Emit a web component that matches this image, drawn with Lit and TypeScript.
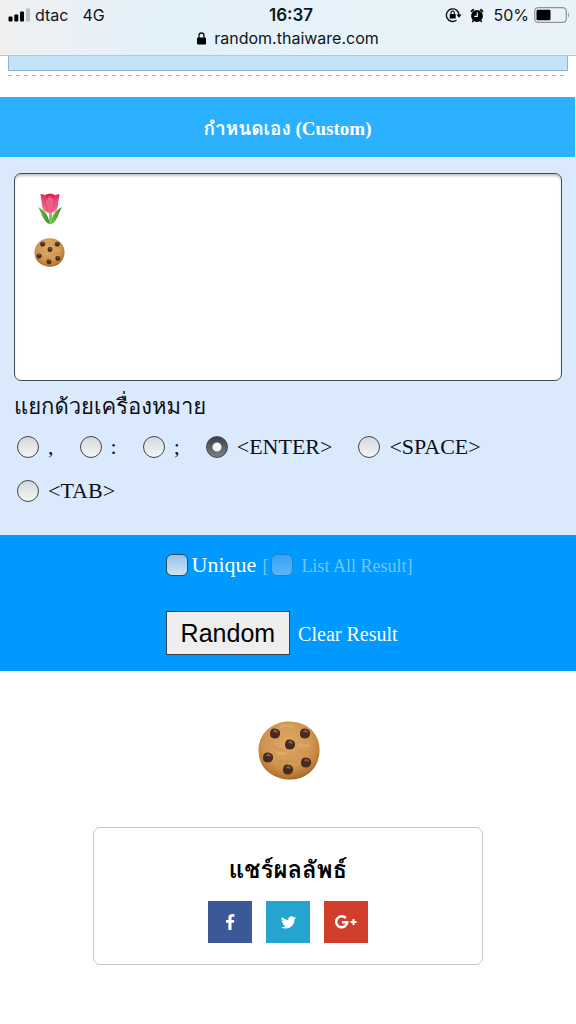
import { LitElement, html, css, svg } from "lit";
import { customElement, state } from "lit/decorators.js";

const CHIPS = [
  [17, 12],
  [47, 12],
  [32, 23],
  [10, 36],
  [48, 41],
  [30, 48],
];

const cookie = (id: string) => html`
  <svg class="cookie" viewBox="0 0 62 59" role="img" aria-label="Cookie">
    <defs>
      <radialGradient id=${id} cx="48%" cy="38%" r="62%">
        <stop offset="0" stop-color="#dda865"></stop>
        <stop offset="0.65" stop-color="#cf9650"></stop>
        <stop offset="0.9" stop-color="#b87a35"></stop>
        <stop offset="1" stop-color="#a2682a"></stop>
      </radialGradient>
    </defs>
    <path
      fill="url(#${id})"
      d="M31 .5C41 .5 50 4 55.500 11C60 17 62 23 61.500 31C61 40 57 48 50 53C44 57 38 59 30 58.500C22 58 14 55 8 49C3 44 .5 37 .5 29C.5 21 4 13 10 8C16 3 23 .5 31 .5Z"
    ></path>
    <path fill="none" stroke="#bf823f" stroke-opacity=".25" stroke-width="2"
      d="M14 24q6 6 13 5M40 30q7 4 14 0M19 40q8 2 14-1"></path>
    <path fill="none" stroke="#eabb7a" stroke-opacity=".4" stroke-width="3"
      d="M22 6q8-3 14 0M18 31q6 3 10 1M41 23q4 3 11 1"></path>
    ${CHIPS.map(
      ([x, y]) => svg`
        <path fill="#4a2a20" d="M${x - 5} ${y + 1}q0-6 5-5.500q6 1 5 6q-1 4-5 4q-5 0-5-4.500Z"/>
        <path fill="#8a5d4c" d="M${x - 2} ${y - 1}q1-3 3-2q2 1 2 3q-2-1-5-1Z"/>`
    )}
  </svg>
`;

const tulip = html`
  <svg class="tulip" viewBox="0 0 26 32" role="img" aria-label="Tulip">
    <defs>
      <linearGradient id="petal" x1="0" y1="0" x2="0" y2="1">
        <stop offset="0" stop-color="#d92d60"></stop>
        <stop offset="0.5" stop-color="#e8567f"></stop>
        <stop offset="1" stop-color="#ef7c9d"></stop>
      </linearGradient>
      <linearGradient id="leaf" x1="0" y1="0" x2="1" y2="0">
        <stop offset="0" stop-color="#74b848"></stop>
        <stop offset="1" stop-color="#3f8f2c"></stop>
      </linearGradient>
    </defs>
    <path fill="#7fc95a" d="M12 17h3v14h-3z"></path>
    <path fill="url(#leaf)" d="M1 14C7 17 12 22 12.500 31C6 29 5 20 1 14Z"></path>
    <path fill="url(#leaf)" d="M25 14C19 17 14 22 14.500 31C20 29 21 21 25 14Z"></path>
    <path fill="#d4275a" d="M8 2Q13-1 18 2L17 12H9Z"></path>
    <path fill="url(#petal)" d="M3.500 1Q7 1 9 3L13 12L14 20Q7 20 5.500 15Q4.500 8 3.500 1Z"></path>
    <path fill="url(#petal)" d="M22.500 1Q19 1 17 3L13 12L12 20Q19 20 20.500 15Q21.500 8 22.500 1Z"></path>
    <path fill="#ec5f87" d="M13 3Q18 7 18 13Q17 18 13 20Q9 18 8 13Q8 7 13 3Z"></path>
    <path fill="none" stroke="#cf2f5f" stroke-opacity=".6" stroke-width=".7" d="M9 6Q8 13 11 18.500M17 6Q18 13 15 18.500"></path>
  </svg>
`;

@customElement("app-root")
export class AppRoot extends LitElement {
  @state() private separator = "<ENTER>";

  static styles = css`
    :host {
      display: block;
      min-height: 100vh;
      background: #fff;
      color: #0b0f18;
      font-family: "Liberation Serif", Loma, Garuda, Waree, "Noto Sans Thai Looped", "Noto Sans Thai", serif;
    }
    * {
      box-sizing: border-box;
    }
    .status {
      height: 56px;
      padding-top: 4px;
      border-bottom: 1px solid #bcc4ca;
      background: linear-gradient(100deg, #f0f0f1, #e3f1fa 28%, #e8f3f9 70%);
      color: #10151a;
      font-family: Inter, sans-serif;
      font-size: 16px;
    }
    .status-row {
      display: grid;
      grid-template-columns: 1fr auto 1fr;
      align-items: center;
      height: 22px;
      padding: 0 6px 0 8px;
    }
    .carrier,
    .indicators {
      display: flex;
      align-items: center;
    }
    .carrier {
      gap: 5px;
    }
    .network {
      margin-left: 9px;
    }
    .indicators {
      justify-content: flex-end;
    }
    .lock-rotation {
      margin-right: 8px;
    }
    .alarm {
      margin-right: 9px;
    }
    .percent {
      margin-right: 5px;
    }
    .clock {
      padding-left: 4px;
      font-weight: 600;
      font-size: 17px;
    }
    .address {
      display: flex;
      justify-content: center;
      align-items: center;
      gap: 8px;
      height: 24px;
    }
    .previous {
      padding: 0 8px;
    }
    .previous-box {
      height: 15px;
      border: 1px solid #8fb4cf;
      border-top: 0;
      background: #c2e3f7;
    }
    .divider {
      height: 1px;
      margin: 4px 0 21px;
      background: repeating-linear-gradient(90deg, #b5b5b5 0 4px, transparent 4px 8px);
    }
    .heading {
      display: flex;
      align-items: center;
      justify-content: center;
      height: 60px;
      margin: 0 1px 1px 0;
      padding-top: 2px;
      background: #2bb1ff;
      color: #fff;
      font-size: 19px;
      font-weight: bold;
    }
    .panel {
      padding: 15px 14px 22px;
      background: #dbe9fc;
    }
    .editor {
      position: relative;
    }
    .entries {
      display: block;
      width: 100%;
      height: 208px;
      padding: 16px 20px;
      border: 1px solid #454a52;
      border-radius: 7px;
      background: #fff;
      box-shadow: inset 0 3px 3px -1px #c4c4c4;
      font: 30px/44px "Liberation Serif", serif;
      resize: none;
      outline: none;
    }
    .pictures {
      position: absolute;
      top: 20px;
      left: 20px;
      display: grid;
      gap: 13px;
      justify-items: center;
      pointer-events: none;
    }
    .cookie,
    .tulip {
      display: block;
    }
    .tulip {
      width: 26px;
      height: 32px;
    }
    .pictures .cookie {
      width: 31px;
      height: 29px;
    }
    .separators {
      margin: 0;
      padding: 0;
      border: 0;
    }
    .legend {
      height: 44px;
      padding: 0;
      font-size: 22px;
      line-height: 52px;
    }
    .options {
      display: flex;
      flex-wrap: wrap;
      column-gap: 26px;
      padding-left: 3px;
    }
    .option {
      display: flex;
      align-items: center;
      gap: 9px;
      height: 44px;
      font-size: 22px;
    }
    .radio,
    .check {
      appearance: none;
      flex: none;
      width: 22px;
      height: 22px;
      margin: 0;
      border: 1px solid #43474d;
    }
    .radio {
      border-radius: 50%;
      background: linear-gradient(#d5d8dc, #f4f5f6);
    }
    .radio:checked {
      background: radial-gradient(circle, #f4f4f4 0 4px, transparent 5px),
        linear-gradient(#3d4045, #7c7f84);
    }
    .check {
      border-color: #3d4853;
      border-radius: 6px;
      background: linear-gradient(#92c3ea, #cfe4f4);
    }
    .check:disabled {
      border-color: #2880c4;
      background: linear-gradient(#35a4f4, #5bb5f6);
    }
    .actions {
      display: flex;
      justify-content: center;
      padding: 18px 14px 16px 16px;
      background: #0099ff;
      color: #fff;
    }
    .action-group {
      display: grid;
      gap: 34px;
    }
    .action-row,
    .choice {
      display: flex;
      align-items: center;
    }
    .unique {
      gap: 4px;
      height: 24px;
      font-size: 22px;
    }
    .nested {
      gap: 8px;
      color: #73c5ff;
      font-size: 18px;
    }
    .bracket {
      margin: 0 3px 0 6px;
      color: #73c5ff;
      font-size: 18px;
    }
    .bracket,
    .nested-text {
      padding-top: 3px;
    }
    .random {
      height: 44px;
      margin-right: 8px;
      padding: 0 14px;
      border: 1px solid #3c4248;
      border-radius: 0;
      background: #eee;
      color: #000;
      font: 25px "Liberation Sans", sans-serif;
    }
    .clear {
      padding-top: 3px;
      color: #fff;
      font-size: 20px;
      text-decoration: none;
    }
    .result {
      display: flex;
      justify-content: center;
      padding: 50px 0 47px 2px;
    }
    .result .cookie {
      width: 62px;
      height: 59px;
    }
    .share {
      display: flex;
      flex-direction: column;
      align-items: center;
      width: 80%;
      max-width: 390px;
      margin: 0 auto;
      padding: 22px 0 21px;
      border: 1px solid #c6c6c6;
      border-radius: 7px;
    }
    .share-title {
      margin: 0 0 11px;
      color: #000;
      font-size: 24px;
      font-weight: bold;
      line-height: 40px;
    }
    .socials {
      display: flex;
      gap: 14px;
    }
    .social {
      display: grid;
      place-items: center;
      width: 44px;
      height: 42px;
    }
    .facebook {
      background: #3b5998;
    }
    .twitter {
      background: #26a4d0;
    }
    .google {
      background: #d13e2b;
    }
  `;

  private renderStatus() {
    return html`
      <header class="status">
        <div class="status-row">
          <div class="carrier">
            <svg width="22" height="14" viewBox="0 0 22 14" aria-hidden="true">
              <rect x=".5" y="8.500" width="4" height="5" rx="1"></rect>
              <rect x="6.300" y="6.500" width="4" height="7" rx="1"></rect>
              <rect x="12" y="3.500" width="4" height="10" rx="1"></rect>
              <rect x="18" y=".5" width="4" height="13" rx="1" fill="#b9bfc3"></rect>
            </svg>
            <span>dtac</span>
            <span class="network">4G</span>
          </div>
          <span class="clock">16:37</span>
          <div class="indicators">
            <svg class="lock-rotation" width="17" height="16" viewBox="0 0 17 16" aria-hidden="true">
              <path fill="none" stroke="#10151a" stroke-width="1.400" d="M11.500 13.200A6.300 6.300 0 1 1 14 8"></path>
              <path d="M11.400 7.500h5.200L14 10.800Z"></path>
              <rect x="4.700" y="7" width="6" height="4.500" rx=".6"></rect>
              <path fill="none" stroke="#10151a" stroke-width="1.100" d="M6 7.200V5.800a1.700 1.700 0 0 1 3.400 0v1.400"></path>
            </svg>
            <svg class="alarm" width="14" height="15" viewBox="0 0 14 15" aria-hidden="true">
              <circle cx="7" cy="8" r="5.900"></circle>
              <path stroke="#10151a" stroke-width="2" stroke-linecap="round" d="M1.500 3.200L3.200 1.800M12.500 3.200L10.800 1.800"></path>
              <path stroke="#10151a" stroke-width="1.500" stroke-linecap="round" d="M3.300 12.500L2.600 13.600M10.700 12.500L11.400 13.600"></path>
              <path fill="none" stroke="#e8f3f9" stroke-width="1.200" d="M7.300 4.500V8.300H4.200"></path>
            </svg>
            <span class="percent">50%</span>
            <svg width="36" height="16" viewBox="0 0 36 16" aria-hidden="true">
              <rect x=".7" y=".7" width="31.600" height="14.600" rx="3.500" fill="none" stroke="#8d9599" stroke-width="1.300"></rect>
              <rect x="2.500" y="2.800" width="14" height="10.400" rx="1.300"></rect>
              <path fill="#8d9599" d="M34 5q2 3 0 6Z"></path>
            </svg>
          </div>
        </div>
        <div class="address">
          <svg width="9" height="13" viewBox="0 0 9 13" aria-hidden="true">
            <rect y="5.500" width="9" height="7" rx="1"></rect>
            <path fill="none" stroke="#10151a" stroke-width="1.300" d="M2 6V3.500a2.500 2.500 0 0 1 5 0V6"></path>
          </svg>
          <span>random.thaiware.com</span>
        </div>
      </header>
    `;
  }

  private renderOption(value: string) {
    return html`
      <label class="option">
        <input
          class="radio"
          type="radio"
          name="separator"
          .value=${value}
          .checked=${this.separator === value}
          @change=${() => (this.separator = value)}
        />
        <span>${value}</span>
      </label>
    `;
  }

  render() {
    return html`
      ${this.renderStatus()}
      <main>
        <div class="previous">
          <div class="previous-box"></div>
          <div class="divider"></div>
        </div>
        <header class="heading">กำหนดเอง (Custom)</header>
        <section class="panel">
          <div class="editor">
            <textarea class="entries" aria-label="กำหนดเอง (Custom)"></textarea>
            <div class="pictures">${tulip}${cookie("dough-small")}</div>
          </div>
          <fieldset class="separators">
            <legend class="legend">แยกด้วยเครื่องหมาย</legend>
            <div class="options">
              ${[",", ":", ";", "<ENTER>", "<SPACE>", "<TAB>"].map((v) => this.renderOption(v))}
            </div>
          </fieldset>
        </section>
        <section class="actions">
          <div class="action-group">
            <div class="action-row">
              <label class="choice unique"><input class="check" type="checkbox" />Unique</label>
              <span class="bracket">[</span>
              <label class="choice nested">
                <input class="check" type="checkbox" disabled />
                <span class="nested-text">List All Result]</span>
              </label>
            </div>
            <div class="action-row">
              <button class="random" type="button">Random</button>
              <a class="clear" href="#">Clear Result</a>
            </div>
          </div>
        </section>
        <section class="result">${cookie("dough-large")}</section>
        <section class="share">
          <h2 class="share-title">แชร์ผลลัพธ์</h2>
          <div class="socials">
            <a class="social facebook" href="#" aria-label="Facebook">
              <svg width="9" height="16" viewBox="0 0 9 16" fill="#fff" aria-hidden="true">
                <path d="M2.400 16V8.800H0V6h2.400V3.900C2.400 1.400 3.900 0 6.200 0q1.600 0 2.200.2v2.500H6.900C5.700 2.700 5.500 3.300 5.500 4.100V6h2.800l-.4 2.800H5.500V16Z"></path>
              </svg>
            </a>
            <a class="social twitter" href="#" aria-label="Twitter">
              <svg width="15" height="13" viewBox="0 0 24 20" fill="#fff" aria-hidden="true">
                <path d="M24 2.400a10 10 0 0 1-2.800.8A5 5 0 0 0 23.300.5a10 10 0 0 1-3.100 1.200A4.900 4.900 0 0 0 11.800 6.200 14 14 0 0 1 1.700 1a4.900 4.900 0 0 0 1.500 6.600A5 5 0 0 1 1 7v.1a4.900 4.900 0 0 0 3.900 4.800 5 5 0 0 1-2.200.1 4.900 4.900 0 0 0 4.600 3.400A9.900 9.900 0 0 1 0 17.500 14 14 0 0 0 7.500 19.700c9.100 0 14.300-7.700 14-14.600A10 10 0 0 0 24 2.400Z"></path>
              </svg>
            </a>
            <a class="social google" href="#" aria-label="Google Plus">
              <svg width="22" height="14" viewBox="0 0 22 14" aria-hidden="true">
                <path fill="none" stroke="#fff" stroke-width="2.500" d="M10.800 3.100A5.500 5.500 0 1 0 12.200 7.200H7"></path>
                <path fill="none" stroke="#fff" stroke-width="2" d="M18.500 4v6M15.500 7h6"></path>
              </svg>
            </a>
          </div>
        </section>
      </main>
    `;
  }
}
